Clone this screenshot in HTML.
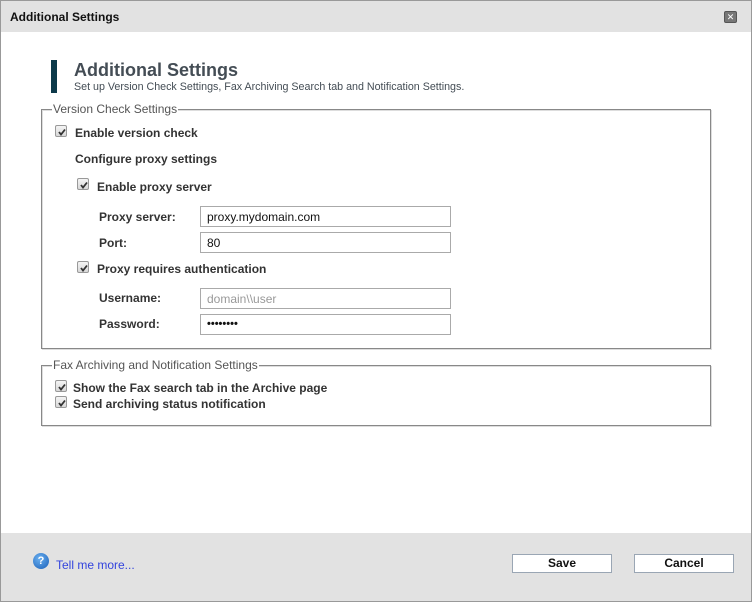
<!DOCTYPE html>
<html><head><style>
*{margin:0;padding:0;box-sizing:border-box}
body{width:752px;height:602px;position:relative;background:#fff;font-family:"Liberation Sans",Arial,sans-serif;overflow:hidden}
.a{position:absolute;white-space:nowrap}
.b{font-weight:bold;font-size:12px;color:#333}
.cb{position:absolute;width:12px;height:12px;border:1px solid #999;border-radius:2px;background:linear-gradient(#f4f4f4,#d8d8d8)}
.cb svg{position:absolute;left:1px;top:1px}
.in{position:absolute;left:200px;width:251px;height:21px;border:1px solid #aaa;font-size:12px;padding:3px 6px;color:#111}
.fs{position:absolute;left:41px;width:670px;border:1px solid #888;box-shadow:inset 1px 1px 0 #ddd, 1px 1px 0 #ddd}
.lg{position:absolute;background:#fff;font-size:12px;color:#555;padding:0 1px}
.btn{position:absolute;top:554px;width:100px;height:19px;border:1px solid #9aa6b4;background:#fff;font-size:12px;font-weight:bold;text-align:center;line-height:17px;color:#111}
</style></head><body>
<div class="a" style="left:0;top:0;width:752px;height:602px;border:1px solid #999"></div>
<div class="a" style="left:1px;top:1px;width:750px;height:31px;background:#e2e2e2"></div>
<div class="a" style="left:10px;top:10px;font-size:12px;font-weight:bold;color:#111">Additional Settings</div>
<div class="a" style="left:724px;top:11px;width:13px;height:12px;background:#777;border:1px solid #555;border-radius:2px;color:#fff;font-size:9px;line-height:10px;text-align:center">✕</div>

<div class="a" style="left:51px;top:60px;width:6px;height:33px;background:#0d3a4a"></div>
<div class="a" style="left:74px;top:60px;font-size:18px;font-weight:bold;color:#444d55">Additional Settings</div>
<div class="a" style="left:74px;top:81px;font-size:10.7px;color:#444d55">Set up Version Check Settings, Fax Archiving Search tab and Notification Settings.</div>

<div class="fs" style="top:109px;height:240px"></div>
<div class="lg" style="left:52px;top:102px">Version Check Settings</div>
<div class="cb" style="left:55px;top:125px"><svg width="10" height="10"><path d="M2 5l2 2.5 4-5" stroke="#333" stroke-width="1.8" fill="none"/></svg></div>
<div class="a b" style="left:75px;top:126px">Enable version check</div>
<div class="a b" style="left:75px;top:152px">Configure proxy settings</div>
<div class="cb" style="left:77px;top:178px"><svg width="10" height="10"><path d="M2 5l2 2.5 4-5" stroke="#333" stroke-width="1.8" fill="none"/></svg></div>
<div class="a b" style="left:97px;top:180px">Enable proxy server</div>
<div class="a b" style="left:99px;top:210px">Proxy server:</div>
<div class="in" style="top:206px">proxy.mydomain.com</div>
<div class="a b" style="left:99px;top:236px">Port:</div>
<div class="in" style="top:232px">80</div>
<div class="cb" style="left:77px;top:261px"><svg width="10" height="10"><path d="M2 5l2 2.5 4-5" stroke="#333" stroke-width="1.8" fill="none"/></svg></div>
<div class="a b" style="left:97px;top:262px">Proxy requires authentication</div>
<div class="a b" style="left:99px;top:291px">Username:</div>
<div class="in" style="top:288px;color:#999">domain\\user</div>
<div class="a b" style="left:99px;top:317px">Password:</div>
<div class="in" style="top:314px;font-weight:bold;font-size:11px;letter-spacing:0">••••••••</div>

<div class="fs" style="top:365px;height:61px"></div>
<div class="lg" style="left:52px;top:358px">Fax Archiving and Notification Settings</div>
<div class="cb" style="left:55px;top:380px"><svg width="10" height="10"><path d="M2 5l2 2.5 4-5" stroke="#333" stroke-width="1.8" fill="none"/></svg></div>
<div class="a b" style="left:73px;top:381px">Show the Fax search tab in the Archive page</div>
<div class="cb" style="left:55px;top:396px"><svg width="10" height="10"><path d="M2 5l2 2.5 4-5" stroke="#333" stroke-width="1.8" fill="none"/></svg></div>
<div class="a b" style="left:73px;top:397px">Send archiving status notification</div>

<div class="a" style="left:1px;top:533px;width:750px;height:68px;background:#e2e2e2"></div>
<div class="a" style="left:33px;top:553px;width:16px;height:16px;border-radius:50%;background:radial-gradient(circle at 40% 35%,#6ab0f0,#1a5fb8);color:#fff;font-size:11px;font-weight:bold;text-align:center;line-height:16px">?</div>
<div class="a" style="left:56px;top:558px;font-size:12px;color:#3344dd">Tell me more...</div>
<div class="btn" style="left:512px">Save</div>
<div class="btn" style="left:634px">Cancel</div>
</body></html>
